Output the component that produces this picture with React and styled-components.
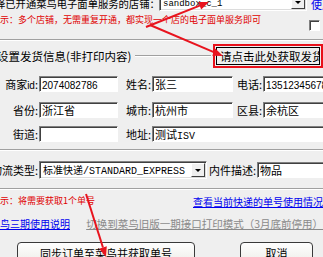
import React from 'react';
import styled, { createGlobalStyle } from 'styled-components';

const GlobalStyle = createGlobalStyle`
  html, body { margin: 0; padding: 0; }
  body {
    width: 323px;
    height: 257px;
    overflow: hidden;
    background: #efefef;
    font-family: "Noto Sans CJK SC", "Liberation Sans", sans-serif;
    font-size: 11px;
    color: #000;
  }
`;

const Page = styled.div`
  position: relative;
  width: 323px;
  height: 257px;
  overflow: hidden;
`;

const ShopRow = styled.div`
  display: flex;
  align-items: center;
  height: 18px;
  margin-top: -7px;
`;

const ShopLabel = styled.span`
  width: 164px;
  margin-left: -5px;
  font-size: 10.3px;
  line-height: 18px;
  padding-top: 4px;
  white-space: nowrap;
  overflow: hidden;
  flex-shrink: 0;
`;

const Combo = styled.div`
  display: flex;
  width: ${p => p.$w}px;
  height: 18px;
  box-sizing: border-box;
  background: #fff;
  border: 1px solid;
  border-color: #808080 #ffffff #ffffff #808080;
  box-shadow: inset 1px 1px 0 #404040, inset -1px -1px 0 #dcdcdc;
  flex-shrink: 0;
`;

const ComboText = styled.span`
  flex: 1;
  padding: 0 0 0 3px;
  font-size: 10px;
  line-height: 16px;
  white-space: nowrap;
  overflow: hidden;
`;

const Mono = styled.span`
  font-family: "Liberation Mono", "DejaVu Sans Mono", monospace;
  font-size: ${p => p.$size || 10}px;
`;

const DropBtn = styled.span`
  width: 14px;
  margin: 1px;
  box-sizing: border-box;
  background: #efefef;
  border: 1px solid;
  border-color: #ffffff #404040 #404040 #ffffff;
  display: flex;
  align-items: center;
  justify-content: center;

  &::after {
    content: "";
    border-left: 3px solid transparent;
    border-right: 3px solid transparent;
    border-top: 3px solid #000;
  }
`;

const Link = styled.a`
  color: ${p => p.$muted ? '#8a8a8a' : '#0000ee'};
  text-decoration: underline;
  font-size: ${p => p.$size || 10}px;
  white-space: nowrap;
  cursor: pointer;
`;

const TopLink = styled(Link)`
  margin-left: 4px;
  font-size: 11px;
  padding-top: 4px;
  text-decoration: none;
`;

const NoteRow = styled.div`
  display: flex;
  justify-content: space-between;
  height: 20px;
`;

const Note = styled.span`
  color: #e00000;
  font-size: 9px;
  line-height: 12px;
  margin-top: 3px;
  white-space: nowrap;
`;

const Check = styled.span`
  align-self: flex-end;
  width: 11px;
  height: 11px;
  box-sizing: border-box;
  margin: 0 3px 0 0;
  background: #fff;
  border: 1px solid;
  border-color: #808080 #ffffff #ffffff #808080;
  box-shadow: inset 1px 1px 0 #404040;
  flex-shrink: 0;
`;

const Etch = styled.div`
  height: 0;
  margin-top: ${p => p.$mt || 0}px;
  border-top: 1px solid #a0a0a0;
  border-bottom: 1px solid #ffffff;
`;

const GroupHead = styled.div`
  display: flex;
  align-items: center;
  height: 24px;
  margin-top: 3px;
`;

const GroupTitle = styled.span`
  margin-left: -3px;
  font-size: 11.5px;
  white-space: nowrap;
`;

const GroupRule = styled.span`
  flex: 1;
  height: 0;
  margin: 0 2px 0 4px;
  border-top: 1px solid #a0a0a0;
  border-bottom: 1px solid #ffffff;
`;

const Highlight = styled.div`
  width: 110px;
  height: 24px;
  box-sizing: border-box;
  border: 2px solid #e8101a;
  padding: 1px;
  flex-shrink: 0;
`;

const FetchBtn = styled.button`
  width: 100%;
  height: 100%;
  box-sizing: border-box;
  padding: 0 0 0 3px;
  text-align: left;
  background: #efefef;
  border: 1px solid #000;
  font-family: inherit;
  font-size: 11.5px;
  white-space: nowrap;
  overflow: hidden;
`;

const FormGrid = styled.div`
  display: grid;
  grid-template-columns: 39px 79px 34px 81px 30px 80px;
  row-gap: 8px;
  padding: 8px 0 7px;
`;

const Label = styled.span`
  display: flex;
  justify-content: flex-end;
  padding-right: 1px;
  font-size: 11px;
  line-height: 16px;
  white-space: nowrap;
  overflow: hidden;
`;

const Field = styled.div`
  grid-column: span ${p => p.$span || 1};
  height: 16px;
  box-sizing: border-box;
  padding-left: 2px;
  background: #fff;
  border: 1px solid;
  border-color: #808080 #ffffff #ffffff #808080;
  box-shadow: inset 1px 1px 0 #404040;
  font-size: 11px;
  line-height: 14px;
  white-space: nowrap;
  overflow: hidden;
`;

const Digits = styled.span`
  font-family: "Liberation Sans", Arial, sans-serif;
  font-size: 10px;
`;

const TypeRow = styled.div`
  display: flex;
  align-items: center;
  height: 18px;
  margin-top: 10px;
`;

const TypeLabel = styled(Label)`
  width: ${p => p.$w}px;
  box-sizing: border-box;
  flex-shrink: 0;
`;

const DescField = styled(Field)`
  width: 80px;
  flex-shrink: 0;
`;

const HintRow = styled.div`
  display: flex;
  align-items: center;
  height: 22px;
`;

const HintNote = styled(Note)`
  margin: 0;
  width: 220px;
`;

const LinkRow = styled.div`
  display: flex;
  align-items: center;
  height: 22px;
`;

const GuideLink = styled(Link)`
  margin-left: -10px;
  width: 127px;
`;

const ActionRow = styled.div`
  display: flex;
  gap: 45px;
  margin-top: 8px;
  padding-left: 17px;
`;

const ActionBtn = styled.button`
  width: ${p => p.$w}px;
  height: 22px;
  padding: 0;
  flex-shrink: 0;
  border: 1px solid #3a3a3a;
  border-radius: 4px;
  background: linear-gradient(#fefefe, #eeede8);
  font-family: inherit;
  font-size: 11px;
  color: #000;
`;

const Overlay = styled.svg`
  position: absolute;
  left: 0;
  top: 0;
  pointer-events: none;
`;

function Arrow({ from, to }) {
  const [x1, y1] = from;
  const [x2, y2] = to;
  const a = Math.atan2(y2 - y1, x2 - x1);
  const len = 10;
  const half = 4;
  const bx = x2 - len * Math.cos(a);
  const by = y2 - len * Math.sin(a);
  const px = -Math.sin(a) * half;
  const py = Math.cos(a) * half;
  const head = `${x2},${y2} ${bx + px},${by + py} ${bx - px},${by - py}`;
  return (
    <g>
      <line x1={x1} y1={y1} x2={bx} y2={by} stroke="#e8141e" strokeWidth="2" />
      <polygon points={head} fill="#e8141e" />
    </g>
  );
}

export default function App() {
  return (
    <Page>
      <GlobalStyle />
      <ShopRow>
        <ShopLabel>择已开通菜鸟电子面单服务的店铺：</ShopLabel>
        <Combo $w={148}>
          <ComboText><Mono $size={9}>sandbox_c_1</Mono></ComboText>
          <DropBtn />
        </Combo>
        <TopLink>使用</TopLink>
      </ShopRow>

      <NoteRow>
        <Note>示：多个店铺，无需重复开通，都实现一个店的电子面单服务即可</Note>
        <Check />
      </NoteRow>

      <Etch $mt={8} />

      <GroupHead>
        <GroupTitle>设置发货信息(非打印内容)</GroupTitle>
        <GroupRule />
        <Highlight>
          <FetchBtn>请点击此处获取发货信息</FetchBtn>
        </Highlight>
      </GroupHead>

      <FormGrid>
        <Label><span>商家<Digits>id</Digits>:</span></Label>
        <Field><Digits>2074082786</Digits></Field>
        <Label><span>姓名:</span></Label>
        <Field>张三</Field>
        <Label><span>电话:</span></Label>
        <Field><Digits>13512345678</Digits></Field>

        <Label><span>省份:</span></Label>
        <Field>浙江省</Field>
        <Label><span>城市:</span></Label>
        <Field>杭州市</Field>
        <Label><span>区县:</span></Label>
        <Field>余杭区</Field>

        <Label><span>街道:</span></Label>
        <Field />
        <Label><span>地址:</span></Label>
        <Field $span={3}>测试<Mono $size={10}>ISV</Mono></Field>
      </FormGrid>

      <Etch />

      <TypeRow>
        <TypeLabel $w={39}><span>物流类型:</span></TypeLabel>
        <Combo $w={168}>
          <ComboText>标准快递<Mono>/STANDARD_EXPRESS</Mono></ComboText>
          <DropBtn />
        </Combo>
        <TypeLabel $w={50}><span>内件描述:</span></TypeLabel>
        <DescField>物品</DescField>
      </TypeRow>

      <Etch $mt={9} />

      <HintRow>
        <HintNote>示：将需要获取1个单号</HintNote>
        <Link>查看当前快递的单号使用情况</Link>
      </HintRow>

      <LinkRow>
        <GuideLink>菜鸟三期使用说明</GuideLink>
        <Link $muted $size={10.5}>切换到菜鸟旧版一期接口打印模式（3月底前停用）</Link>
      </LinkRow>

      <ActionRow>
        <ActionBtn $w={178}>同步订单至菜鸟并获取单号</ActionBtn>
        <ActionBtn $w={73}>取消</ActionBtn>
      </ActionRow>

      <Overlay width="323" height="257" viewBox="0 0 323 257">
        <Arrow from={[146, 27]} to={[209, 2]} />
        <Arrow from={[150, 25]} to={[223, 56]} />
        <Arrow from={[86, 194]} to={[106, 257]} />
      </Overlay>
    </Page>
  );
}
